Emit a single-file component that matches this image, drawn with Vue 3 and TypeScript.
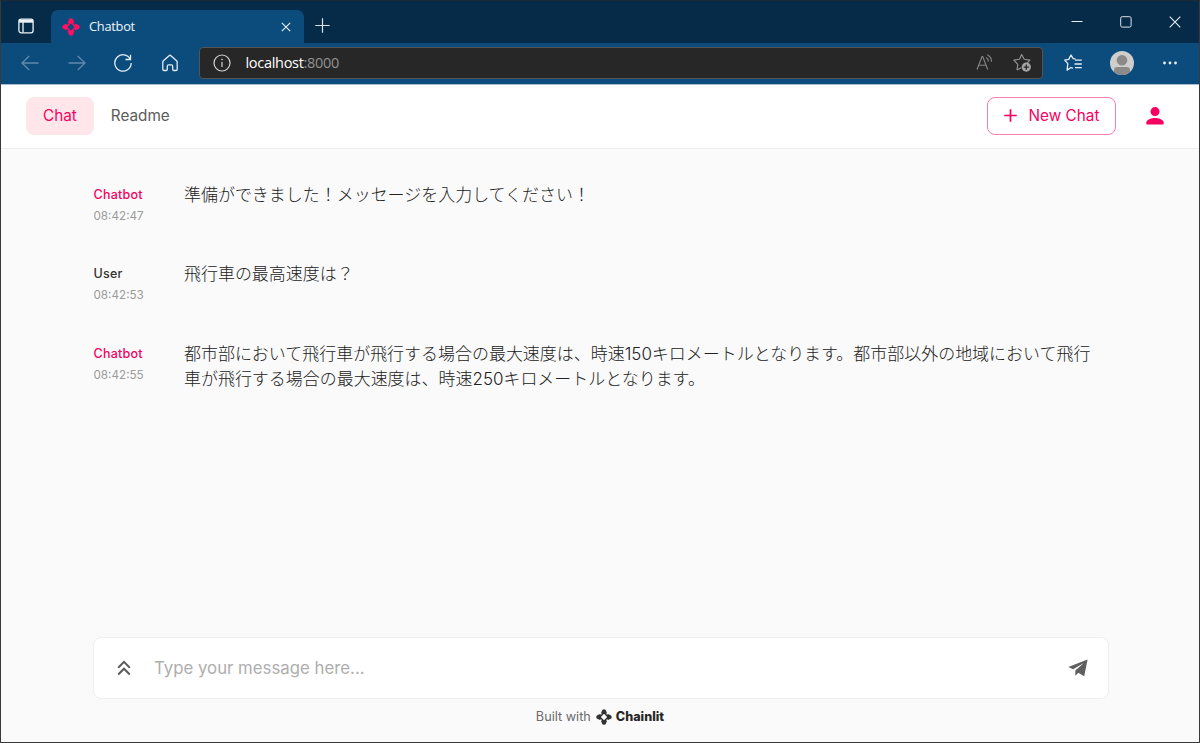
<script setup lang="ts">
import { ref } from 'vue'

interface Message {
  author: string
  time: string
  text: string
  bot: boolean
}

const messages: Message[] = [
  { author: 'Chatbot', time: '08:42:47', text: '準備ができました！メッセージを入力してください！', bot: true },
  { author: 'User', time: '08:42:53', text: '飛行車の最高速度は？', bot: false },
  {
    author: 'Chatbot',
    time: '08:42:55',
    text: '都市部において飛行車が飛行する場合の最大速度は、時速150キロメートルとなります。都市部以外の地域において飛行車が飛行する場合の最大速度は、時速250キロメートルとなります。',
    bot: true,
  },
]

const draft = ref('')
</script>

<template>
  <div class="window">
    <div class="tabbar">
      <div class="workspace">
        <svg width="16" height="16" viewBox="0 0 16 16" fill="none" stroke="#eef3f7" stroke-width="1.3">
          <rect x="0.9" y="1.2" width="14.2" height="13.6" rx="2.2" />
          <path d="M1 3.2h14" stroke-width="3" />
          <path d="M5 4v10.5" />
        </svg>
      </div>
      <div class="tab">
        <svg width="18" height="18" viewBox="0 0 18 18" fill="#ff0f62">
          <path d="M9 4.3 13.7 9 9 13.7 4.3 9z" fill="none" stroke="#ff0f62" stroke-width="1.6" />
          <path d="M6.7 2Q7 .3 9 .3T11.3 2L12.3 4.6Q12 6 9 5.6 6 6 5.7 4.6zM16 6.7q1.7.3 1.7 2.3T16 11.3L13.4 12.3Q12 12 12.4 9 12 6 13.4 5.7zM11.3 16Q11 17.7 9 17.7T6.7 16L5.7 13.4Q6 12 9 12.4 12 12 12.3 13.4zM2 11.3Q.3 11 .3 9T2 6.7L4.6 5.7Q6 6 5.6 9 6 12 4.6 12.3z" />
        </svg>
        <span class="tab-title">Chatbot</span>
        <svg width="10" height="10" viewBox="0 0 10 10" stroke="#e3ebf2" stroke-width="1.2"><path d="m.8.8 8.4 8.4M9.2.8.8 9.2" /></svg>
      </div>
      <svg class="add-tab" width="15" height="15" viewBox="0 0 15 15" stroke="#dbe3ea" stroke-width="1.2"><path d="M7.5.3v14.4M.3 7.5h14.4" /></svg>
      <div class="controls">
        <svg width="12" height="12" viewBox="0 0 12 12" stroke="#e8edf1"><path d="M.5 5.5h11" /></svg>
        <svg width="12" height="12" viewBox="0 0 12 12" fill="none" stroke="#dce3e9"><rect x=".7" y=".7" width="10.4" height="10.4" rx="1.5" /></svg>
        <svg width="12" height="12" viewBox="0 0 12 12" stroke="#e8edf1" stroke-width="1.1"><path d="m.7.7 10.6 10.6M11.3.7.7 11.3" /></svg>
      </div>
    </div>

    <div class="toolbar">
      <div class="nav">
        <svg class="dim" width="18" height="18" viewBox="0 0 18 18"><path d="M17.5 9H1M8.2 2 1 9l7.2 7" /></svg>
        <svg class="dim" width="18" height="18" viewBox="0 0 18 18"><path d="M.5 9H17M9.8 2 17 9l-7.2 7" /></svg>
        <svg width="18" height="18" viewBox="0 0 18 18"><path d="M16.3 5.2A8.2 8.2 0 1 0 17.2 9M16.5.8v4.7h-5" /></svg>
        <svg width="18" height="18" viewBox="0 0 18 18"><path d="M1.8 8.2Q1.8 7.4 2.4 6.8L8.1 1.7q.9-.8 1.8 0l5.7 5.1q.6.6.6 1.4v7q0 1.3-1.2 1.3h-2.1q-1.2 0-1.2-1.2v-3.1q0-1.3-1.3-1.3H7.6q-1.3 0-1.3 1.3v3.1q0 1.2-1.2 1.2H3q-1.2 0-1.2-1.3z" /></svg>
      </div>
      <div class="address">
        <svg width="18" height="18" viewBox="0 0 18 18" fill="none" stroke="#d4d4d4" stroke-width="1.2">
          <circle cx="9" cy="9" r="8" /><path d="M9 8v5" /><circle cx="9" cy="5.5" r=".5" fill="#d4d4d4" stroke-width=".7" />
        </svg>
        <span class="url">localhost<span>:8000</span></span>
        <svg class="read" width="18" height="18" viewBox="0 0 18 18" fill="none" stroke="#858585" stroke-width="1.15">
          <path d="m1 15.5 5-13h.7l5 13M2.8 11.2h7.1M10.2 3.4q2.3 1.4 2.2 4M11.3.8q4.4 2.3 4.2 7" />
        </svg>
        <svg width="20" height="20" viewBox="0 0 20 20" fill="none" stroke="#949494" stroke-width="1.15" stroke-linejoin="round">
          <path d="m5 17 .8-5.7-4-4.2 5.7-.8L9.6 1.5l2.6 4.8 5.7.8-2.7 2.8M5 17l4.3-2.2" />
          <circle cx="14.3" cy="14.1" r="4.6" fill="#a5a5a5" stroke="none" /><path d="M14.3 11.5v5.2M11.7 14.1h5.2" stroke="#282828" stroke-width="1.3" />
        </svg>
      </div>
      <div class="profile">
        <svg width="18" height="18" viewBox="0 0 18 18" fill="none" stroke="#e1edf7" stroke-width="1.3" stroke-linejoin="round">
          <path d="m11.5 5-2.3-.4L7 1 4.7 5.4l-4 .7 3.1 3.6-.7 6.4L7 13.5l1.9.9M11 6.2h6.8M10.5 10h7.3M11 13.6h6.8" />
        </svg>
        <svg class="avatar" width="24" height="24" viewBox="0 0 24 24">
          <circle cx="12" cy="12" r="12" fill="#d0cecd" /><circle cx="12" cy="9.2" r="5.3" fill="#8c8a89" />
          <path d="M4 21v-1.8Q4 16 7.5 16h9q3.5 0 3.5 3.2V21a12 12 0 0 1-16 0" fill="#8c8a89" />
        </svg>
        <svg width="16" height="4" viewBox="0 0 16 4" fill="#e8f0f7"><circle cx="2.5" cy="2" r="1.4" /><circle cx="8" cy="2" r="1.4" /><circle cx="13.5" cy="2" r="1.4" /></svg>
      </div>
    </div>

    <header class="header">
      <button class="link active">Chat</button>
      <button class="link">Readme</button>
      <button class="new-chat">
        <svg width="13" height="13" viewBox="0 0 13 13" stroke="#f80061" stroke-width="1.7"><path d="M6.5.2v12.6M.2 6.5h12.6" /></svg>
        New Chat
      </button>
      <svg class="person" width="18" height="18" viewBox="0 0 18 18" fill="#f80061">
        <circle cx="9" cy="4.6" r="4.5" /><path d="M.4 17.5v-2.2C.4 12.4 6.1 11 9 11s8.6 1.4 8.6 4.3v2.2z" />
      </svg>
    </header>

    <main class="conversation">
      <article v-for="message in messages" :key="message.time" class="message">
        <div class="meta">
          <div class="author" :class="{ bot: message.bot }">{{ message.author }}</div>
          <div class="time">{{ message.time }}</div>
        </div>
        <p class="text">{{ message.text }}</p>
      </article>
    </main>

    <footer class="footer">
      <div class="composer">
        <svg width="14" height="16" viewBox="0 0 14 16" fill="none" stroke="#5c5c5c" stroke-width="2"><path d="m1.2 7.7 5.8-5.8 5.8 5.8M1.2 14.5 7 8.7l5.8 5.8" /></svg>
        <input v-model="draft" placeholder="Type your message here..." />
        <svg width="20" height="18" viewBox="0 0 20 18" fill="#5f5f5f">
          <path d="M19.6.4.3 8l4.9 2.2L15.8 4 7.3 11.4v5.3l3-3 5.9 3.5z" />
        </svg>
      </div>
      <div class="credit">
        <span>Built with</span>
        <svg width="16" height="16" viewBox="0 0 18 18" fill="#323232">
          <path d="M9 4.3 13.7 9 9 13.7 4.3 9z" fill="none" stroke="#323232" stroke-width="1.6" />
          <path d="M6.7 2Q7 .3 9 .3T11.3 2L12.3 4.6Q12 6 9 5.6 6 6 5.7 4.6zM16 6.7q1.7.3 1.7 2.3T16 11.3L13.4 12.3Q12 12 12.4 9 12 6 13.4 5.7zM11.3 16Q11 17.7 9 17.7T6.7 16L5.7 13.4Q6 12 9 12.4 12 12 12.3 13.4zM2 11.3Q.3 11 .3 9T2 6.7L4.6 5.7Q6 6 5.6 9 6 12 4.6 12.3z" />
        </svg>
        <strong>Chainlit</strong>
      </div>
    </footer>
  </div>
</template>

<style>
body {
  margin: 0;
  overflow: hidden;
}
</style>

<style scoped>
* {
  box-sizing: border-box;
}
svg {
  display: block;
  flex: none;
}
button {
  font: inherit;
  color: inherit;
  border: 0;
  background: none;
}
.window {
  display: flex;
  flex-direction: column;
  width: 1200px;
  height: 743px;
  border: 1px solid #393939;
  border-top-color: #1d2a33;
  background: #fafafa;
  font-family: Inter, 'Noto Sans CJK JP', sans-serif;
}
.tabbar {
  display: flex;
  height: 42px;
  flex: none;
  background: #062b48;
}
.workspace {
  width: 50px;
  padding: 17px 0 0 17px;
}
.tab {
  display: flex;
  align-items: center;
  width: 253px;
  height: 33px;
  margin-top: 9px;
  padding: 0 13px 0 11px;
  border-radius: 7px 7px 0 0;
  background: #0c4c7d;
  color: #f0f5f9;
  font: 12.8px 'Open Sans', 'Noto Sans', sans-serif;
  letter-spacing: -0.25px;
}
.tab-title {
  flex: 1;
  margin-left: 9px;
  padding-bottom: 2px;
}
.add-tab {
  margin: 17px 0 0 10.5px;
}
.controls {
  display: flex;
  gap: 37px;
  margin: 15px 18px 0 auto;
}
.toolbar {
  display: flex;
  align-items: center;
  height: 42px;
  flex: none;
  padding-bottom: 1px;
  border-bottom: 1px solid #a9bfd1;
  background: #0c4c7d;
}
.nav {
  display: flex;
  gap: 28.5px;
  width: 198px;
  padding-left: 20px;
}
.nav svg {
  fill: none;
  stroke: #e1edf7;
  stroke-width: 1.3;
}
.nav .dim {
  stroke: #6089aa;
}
.address {
  display: flex;
  align-items: center;
  width: 844px;
  height: 32px;
  padding: 0 10px 0 13px;
  border: 1px solid #545454;
  border-radius: 4px;
  background: #272727;
}
.url {
  flex: 1;
  margin-left: 14.5px;
  padding-bottom: 2px;
  color: #fff;
  font: 14.5px 'Open Sans', 'Noto Sans', sans-serif;
  letter-spacing: -0.3px;
}
.url span {
  color: #929292;
}
.read {
  margin-right: 18px;
}
.profile {
  display: flex;
  align-items: center;
  margin-left: 21px;
}
.avatar {
  margin: 0 28px 0 27.5px;
}
.header {
  display: flex;
  align-items: center;
  height: 64px;
  flex: none;
  padding: 0 35px 1px 25px;
  border-bottom: 1px solid #eee;
  background: #fff;
  font-size: 15.3px;
  font-weight: 400;
}
.link {
  height: 38px;
  padding: 0 17px 1px;
  border-radius: 8px;
  color: #5c5c5c;
}
.active {
  background: #ffe6eb;
  color: #f80061;
}
.new-chat {
  display: flex;
  align-items: center;
  justify-content: center;
  gap: 12px;
  width: 129px;
  height: 38px;
  margin-left: auto;
  padding: 0 0 1px;
  border: 1px solid #fb80b0;
  border-radius: 8px;
  color: #f80061;
}
.person {
  margin-left: 30px;
}
.conversation {
  flex: 1;
  padding: 33px 100px 0 92.5px;
}
.message {
  display: flex;
  min-height: 79.4px;
}
.meta {
  width: 90.5px;
  flex: none;
}
.author {
  height: 25px;
  color: #323232;
  font-size: 12.5px;
  font-weight: 500;
  line-height: 26px;
  letter-spacing: 0.25px;
}
.bot {
  color: #f80061;
}
.time {
  color: #9b9b9b;
  font-size: 11.7px;
  line-height: 18px;
}
.text {
  margin: 1px 0 0;
  width: 914px;
  color: #212121;
  font-size: 16.98px;
  font-weight: 300;
  line-height: 25.3px;
  word-break: break-all;
}
.footer {
  padding: 0 90px 17.5px 92px;
}
.composer {
  display: flex;
  align-items: center;
  height: 62px;
  padding: 0 20px 1px 23px;
  border: 1px solid #efefef;
  border-radius: 8px;
  background: #fff;
}
.composer input {
  flex: 1;
  margin-left: 23px;
  padding: 0;
  border: 0;
  outline: 0;
  background: none;
  font: 16.8px Inter, 'Noto Sans CJK JP', sans-serif;
}
.composer input::placeholder {
  color: #aeaeae;
  opacity: 1;
}
.credit {
  display: flex;
  align-items: center;
  justify-content: center;
  height: 16px;
  margin: 9.5px 2px 0 0;
  color: #6b6b6b;
  font-size: 12.7px;
}
.credit svg {
  margin: 0 4px 0 5px;
}
.credit strong {
  color: #272727;
  font-size: 12.6px;
  font-weight: 800;
}
</style>
